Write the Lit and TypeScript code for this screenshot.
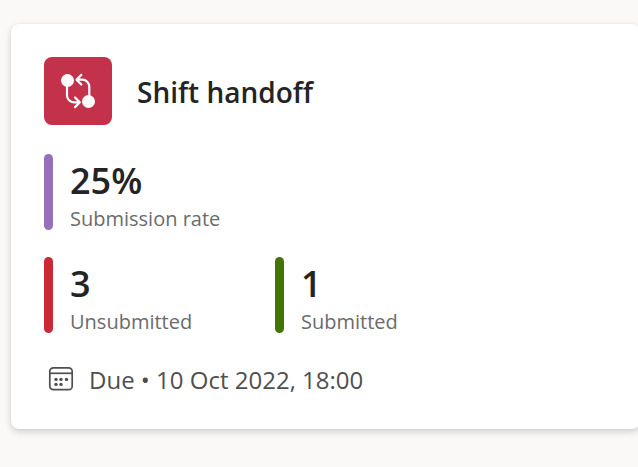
import { LitElement, html, css } from "lit";
import { customElement, property } from "lit/decorators.js";

@customElement("stat-item")
export class StatItem extends LitElement {
  @property() value = "";
  @property() label = "";
  @property() tone = "rate";

  static styles = css`
    :host {
      display: block;
    }
    .stat {
      display: flex;
      gap: 17px;
    }
    .bar {
      width: 9px;
      border-radius: 5px;
    }
    .rate {
      background: #9470bd;
    }
    .missing {
      background: #cc2936;
    }
    .done {
      background: #437406;
    }
    .text {
      display: flex;
      flex-direction: column;
      gap: 6px;
      padding-top: 6px;
    }
    .value {
      font-size: 36px;
      line-height: 42px;
      font-weight: 600;
      color: #242424;
    }
    .label {
      font-size: 20px;
      line-height: 22px;
      font-weight: 400;
      color: #6b6b6b;
    }
  `;

  render() {
    return html`
      <div class="stat">
        <span class="bar ${this.tone}"></span>
        <div class="text">
          <span class="value">${this.value}</span>
          <span class="label">${this.label}</span>
        </div>
      </div>
    `;
  }
}

@customElement("app-root")
export class AppRoot extends LitElement {
  static styles = css`
    :host {
      display: block;
      box-sizing: border-box;
      min-height: 100vh;
      overflow: hidden;
      padding: 24px 0 36px 11px;
      background: #faf9f8;
      font-family: "Segoe UI", "Open Sans", "Noto Sans", sans-serif;
    }
    .card {
      margin-right: -2px;
      padding: 33px;
      border-radius: 8px;
      background: #fff;
      box-shadow: 0 3px 7px rgba(0, 0, 0, 0.16), 0 0 2px rgba(0, 0, 0, 0.08);
    }
    .head {
      display: flex;
      align-items: center;
      gap: 25px;
    }
    .logo {
      display: block;
      width: 68px;
      height: 68px;
      border-radius: 8px;
      background: #c4314b;
    }
    .title {
      margin: 0;
      padding-top: 2px;
      font-size: 28px;
      line-height: 36px;
      font-weight: 600;
      color: #242424;
    }
    .stats {
      display: grid;
      grid-template-columns: 204px 1fr;
      gap: 27px;
      padding-top: 29px;
    }
    .wide {
      grid-column: 1 / -1;
    }
    .due {
      display: flex;
      align-items: center;
      gap: 15px;
      padding: 31px 0 0 4px;
      font-size: 24px;
      line-height: 32px;
      color: #4f4f4f;
    }
    .calendar {
      width: 26px;
      height: 26px;
      margin-bottom: 2px;
    }
  `;

  render() {
    return html`
      <article class="card">
        <header class="head">
          <svg class="logo" viewBox="0 0 68 68" aria-hidden="true">
            <circle cx="23.5" cy="23.5" r="6.5" fill="#fff" />
            <circle cx="44.5" cy="44.5" r="6.5" fill="#fff" />
            <g fill="none" stroke="#fff" stroke-width="2.2" stroke-linecap="round" stroke-linejoin="round">
              <path d="M23 29v9.300a7 7 0 0 0 7 7h5.300M31 40.500l4.800 4.800-4.800 4.800" />
              <path d="M45.300 39v-9.300a7 7 0 0 0-7-7H33M37.300 17.900l-4.800 4.800 4.800 4.800" />
            </g>
          </svg>
          <h1 class="title">Shift handoff</h1>
        </header>
        <div class="stats">
          <stat-item class="wide" value="25%" label="Submission rate" tone="rate"></stat-item>
          <stat-item value="3" label="Unsubmitted" tone="missing"></stat-item>
          <stat-item value="1" label="Submitted" tone="done"></stat-item>
        </div>
        <div class="due">
          <svg class="calendar" viewBox="0 0 26 26" aria-hidden="true">
            <g fill="none" stroke="#4f4f4f" stroke-width="1.700">
              <rect x="1.800" y="1.800" width="22.400" height="21.900" rx="3.500" />
              <path d="M2 7.300h22" />
            </g>
            <g fill="#4f4f4f">
              <circle cx="8" cy="13.400" r="1.700" />
              <circle cx="13" cy="13.400" r="1.700" />
              <circle cx="18.500" cy="13.400" r="1.700" />
              <circle cx="8" cy="18.400" r="1.700" />
              <circle cx="13" cy="18.400" r="1.700" />
            </g>
          </svg>
          <time datetime="2022-10-10T18:00">Due • 10 Oct 2022, 18:00</time>
        </div>
      </article>
    `;
  }
}
